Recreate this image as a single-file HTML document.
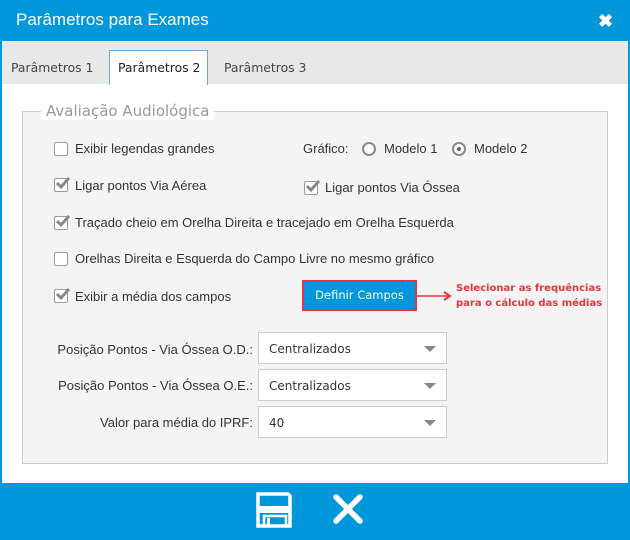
<!DOCTYPE html>
<html><head><meta charset="utf-8"><style>
*{margin:0;padding:0;box-sizing:border-box}
body{width:630px;height:540px;position:relative;background:#0098da;font-family:"Liberation Sans",sans-serif;overflow:hidden}
.abs{position:absolute}
.title{left:16px;top:10px;color:#fff;font-size:17px}
.body{left:2px;top:41px;width:626px;height:442px;background:#fff}
.tabs{left:2px;top:41px;width:626px;height:43px;background:#e8e8e8}
.tab{top:60px;color:#444;font-family:"DejaVu Sans",sans-serif;font-size:12.4px}
.fs{left:22px;top:111px;width:586px;height:353px;background:#f4f4f4;border:1px solid #ccc}
.legend{left:41px;top:102px;background:#fff;padding:0 5px;color:#999;font-family:"DejaVu Sans",sans-serif;font-size:15px}
.t{font-size:13px;color:#333}
.cb{width:14px;height:14px;border:1.5px solid #999;border-radius:2px;background:#fff}
.rb{width:14px;height:14px;border:2px solid #888;border-radius:50%;background:#fff}
.sel{width:189px;height:32px;background:#fff;border:1px solid #ccc;font-family:"DejaVu Sans",sans-serif;font-size:12px;color:#333;padding:9px 10px}
.sel:after{content:"";position:absolute;right:10px;top:13px;border-left:6px solid transparent;border-right:6px solid transparent;border-top:6px solid #888}
.lbl{font-size:13px;color:#333;text-align:right;width:240px;left:13px}
.ck{position:absolute}
</style></head><body>
<div class="abs title">Parâmetros para Exames</div>
<div class="abs" style="left:598px;top:11px;color:#fff;font-size:18px;font-weight:bold">✖</div>
<div class="abs body"></div>
<div class="abs tabs"></div>
<div class="abs" style="left:109px;top:50px;width:99px;height:35px;background:#fff;border:1px solid #6aa7d6;border-bottom:none"></div>
<div class="abs tab" style="left:11px">Parâmetros 1</div>
<div class="abs tab" style="left:118px;color:#222">Parâmetros 2</div>
<div class="abs tab" style="left:224px">Parâmetros 3</div>
<div class="abs fs"></div>
<div class="abs legend">Avaliação Audiológica</div>

<div class="abs cb" style="left:54px;top:142px"></div><div class="abs t" style="left:75px;top:141px">Exibir legendas grandes</div>
<div class="abs t" style="left:303px;top:141px">Gráfico:</div>
<div class="abs rb" style="left:362px;top:142px"></div><div class="abs t" style="left:384px;top:141px">Modelo 1</div>
<div class="abs rb" style="left:452px;top:142px"></div><div class="abs" style="left:457px;top:147px;width:4px;height:4px;border-radius:50%;background:#666"></div><div class="abs t" style="left:474px;top:141px">Modelo 2</div>

<div class="abs cb" style="left:54px;top:178px"></div><svg class="ck" style="left:55px;top:176px" width="16" height="14"><path d="M2 7 L6 11 L14 2" fill="none" stroke="#888" stroke-width="3"/></svg><div class="abs t" style="left:75px;top:178px">Ligar pontos Via Aérea</div>
<div class="abs cb" style="left:304px;top:181px"></div><svg class="ck" style="left:305px;top:179px" width="16" height="14"><path d="M2 7 L6 11 L14 2" fill="none" stroke="#888" stroke-width="3"/></svg><div class="abs t" style="left:325px;top:180px">Ligar pontos Via Óssea</div>

<div class="abs cb" style="left:54px;top:216px"></div><svg class="ck" style="left:55px;top:214px" width="16" height="14"><path d="M2 7 L6 11 L14 2" fill="none" stroke="#888" stroke-width="3"/></svg><div class="abs t" style="left:75px;top:215px">Traçado cheio em Orelha Direita e tracejado em Orelha Esquerda</div>

<div class="abs cb" style="left:54px;top:252px"></div><div class="abs t" style="left:75px;top:251px">Orelhas Direita e Esquerda do Campo Livre no mesmo gráfico</div>

<div class="abs cb" style="left:54px;top:289px"></div><svg class="ck" style="left:55px;top:287px" width="16" height="14"><path d="M2 7 L6 11 L14 2" fill="none" stroke="#888" stroke-width="3"/></svg><div class="abs t" style="left:75px;top:289px">Exibir a média dos campos</div>

<div class="abs" style="left:302px;top:280px;width:115px;height:31px;background:#0098da;border:2px solid #e8353b;color:#fff;font-family:'DejaVu Sans',sans-serif;font-size:11.5px;text-align:center;line-height:27px">Definir Campos</div>
<svg class="abs" style="left:417px;top:290px" width="40" height="12"><line x1="0" y1="6" x2="32" y2="6" stroke="#e8353b" stroke-width="1.5"/><path d="M27 2 L33 6 L27 10" fill="none" stroke="#e8353b" stroke-width="2"/></svg>
<div class="abs" style="left:456px;top:281px;color:#e8353b;font-family:'DejaVu Sans',sans-serif;font-size:10px;font-weight:bold;line-height:15px">Selecionar as frequências<br>para o cálculo das médias</div>

<div class="abs lbl" style="top:342px">Posição Pontos - Via Óssea O.D.:</div>
<div class="abs sel" style="left:258px;top:332px">Centralizados</div>
<div class="abs lbl" style="top:378px">Posição Pontos - Via Óssea O.E.:</div>
<div class="abs sel" style="left:258px;top:369px">Centralizados</div>
<div class="abs lbl" style="top:415px">Valor para média do IPRF:</div>
<div class="abs sel" style="left:258px;top:406px">40</div>

<svg class="abs" style="left:256px;top:492px" width="36" height="36"><path d="M2 2 H32 L34 4 V34 H2 Z" fill="none" stroke="#fff" stroke-width="3.5"/><rect x="2" y="14" width="32" height="7" fill="#fff"/><rect x="8" y="24" width="22" height="10" fill="none" stroke="#fff" stroke-width="2.5"/><rect x="11" y="26" width="3" height="8" fill="#fff"/></svg>
<svg class="abs" style="left:332px;top:493px" width="32" height="32"><path d="M4 4 L28 28 M28 4 L4 28" stroke="#fff" stroke-width="5.5" stroke-linecap="round"/></svg>
</body></html>
